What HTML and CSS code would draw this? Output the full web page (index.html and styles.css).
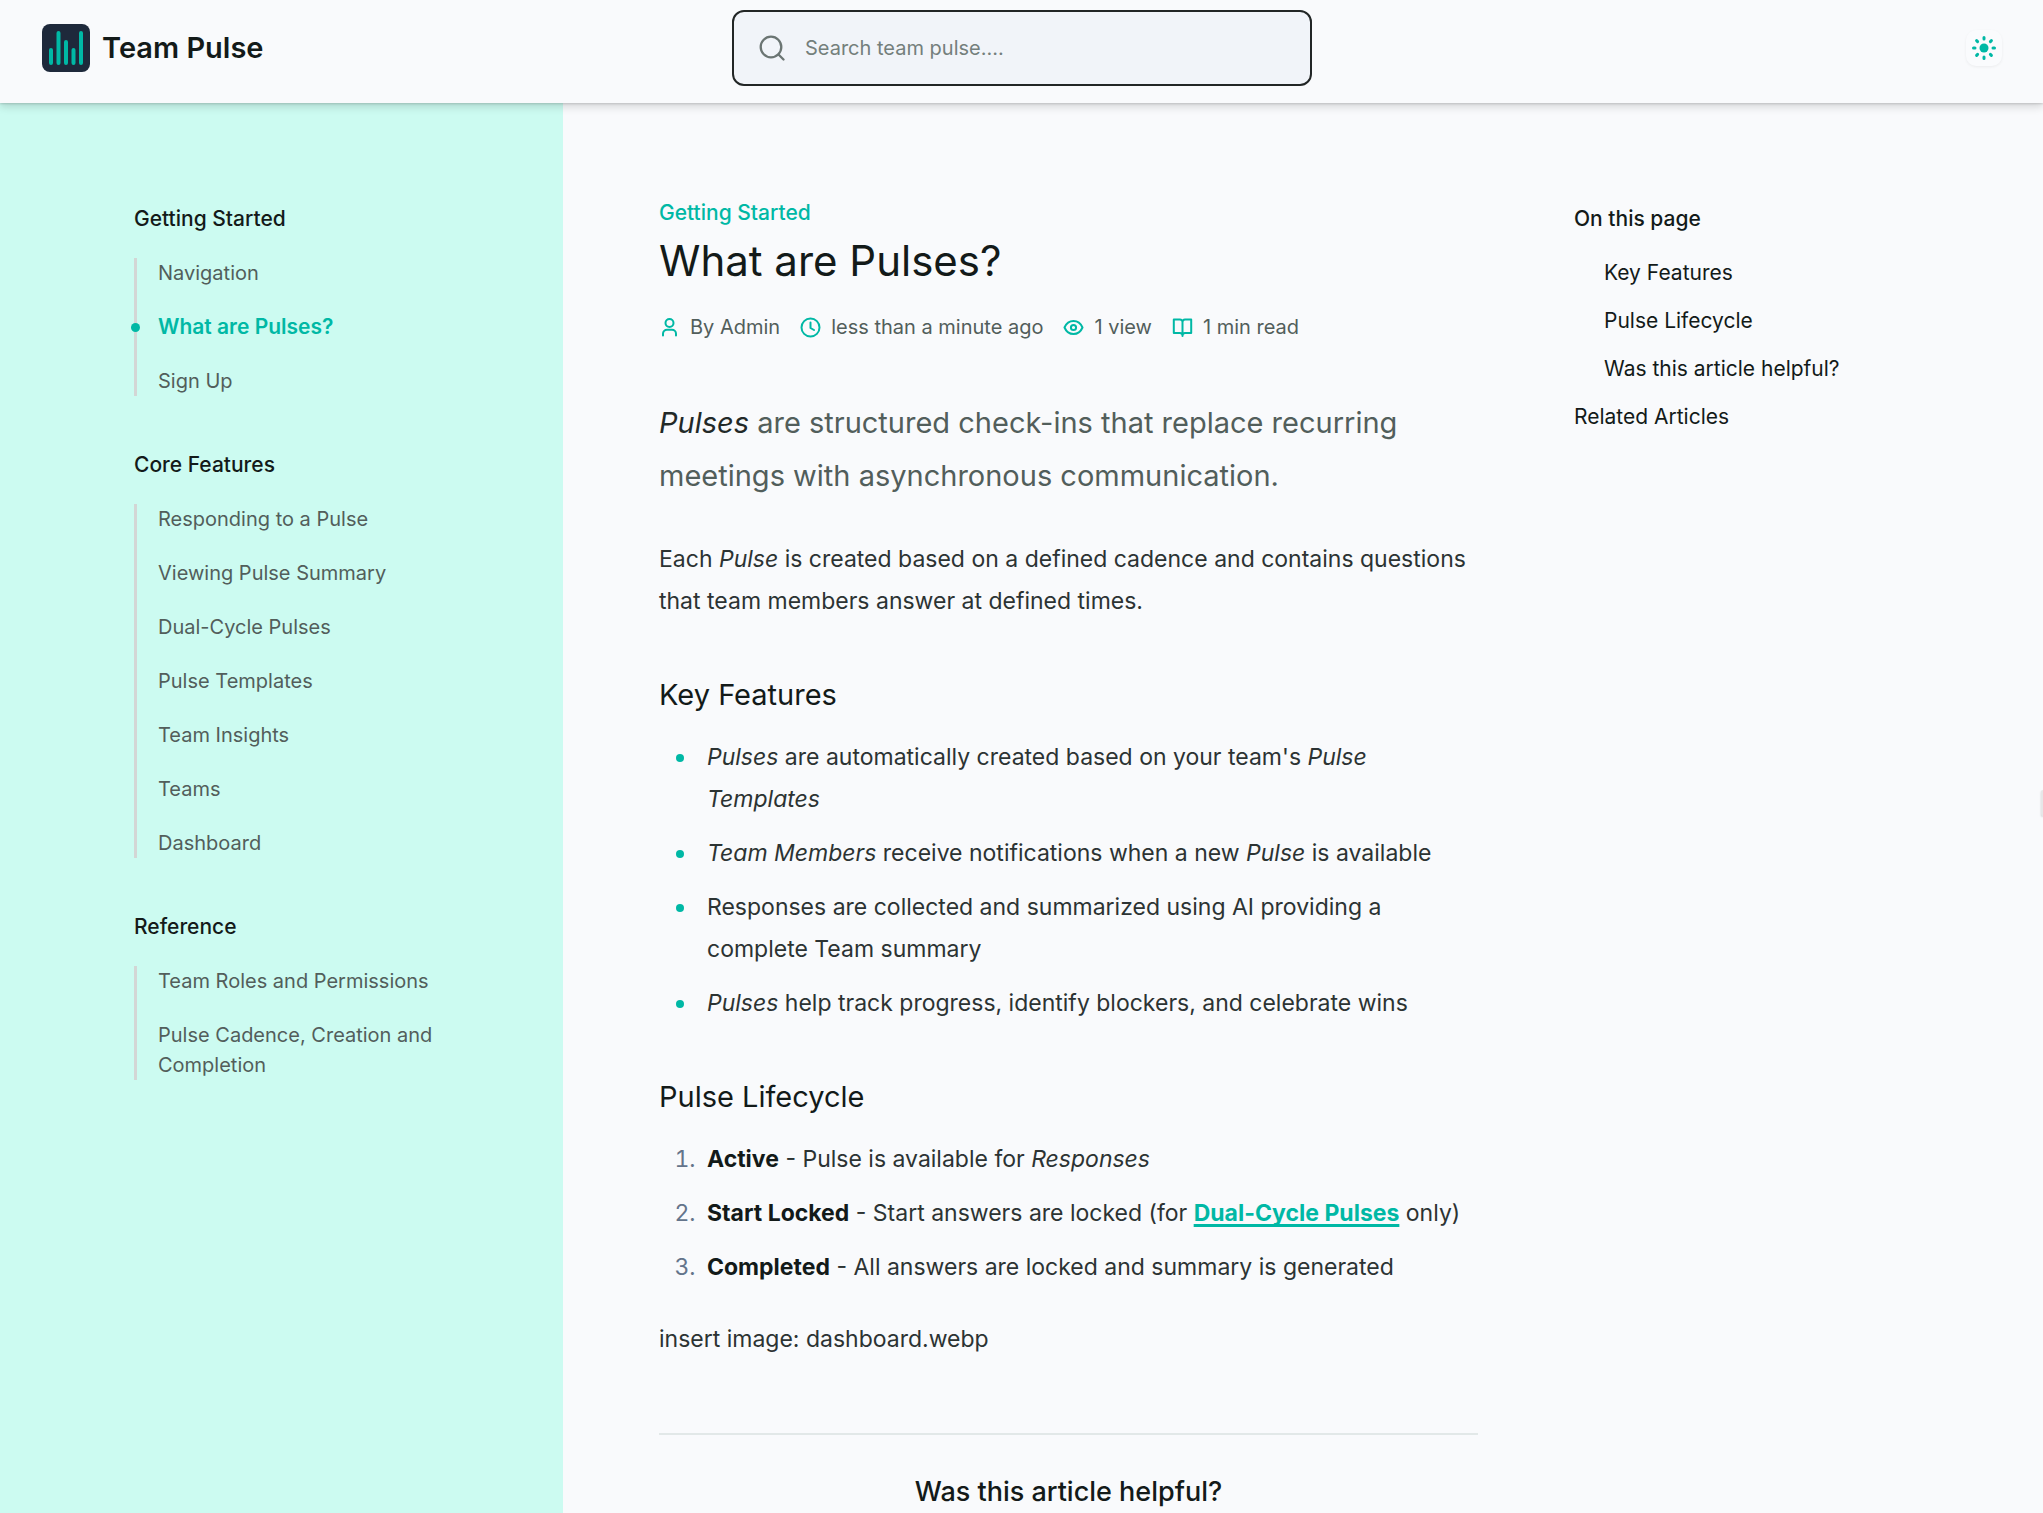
FILE: index.html
```html
<!DOCTYPE html>
<html lang="en">
<head>
<meta charset="utf-8">
<meta name="viewport" content="width=device-width, initial-scale=1">
<title>What are Pulses? - Team Pulse</title>
<link rel="stylesheet" href="styles.css">
</head>
<body>
<header class="site-header">
  <a class="brand" href="#">
    <svg class="brand-mark" viewBox="0 0 48 48" aria-hidden="true">
      <rect width="48" height="48" rx="8" fill="#1e293b"/>
      <path d="M9 26v13M16.500 9v30M24 18v21M31.500 26v13M39 9v30" stroke="#00b8a5" stroke-width="4" stroke-linecap="round"/>
    </svg>
    <span>Team Pulse</span>
  </a>
  <label class="search">
    <svg class="search-icon" viewBox="0 0 26 26" fill="none" stroke="currentColor" stroke-width="2.300" stroke-linecap="round" aria-hidden="true">
      <circle cx="12" cy="12" r="10.300"/><path d="M19.500 19.500l5 5"/>
    </svg>
    <input class="search-input" type="search" placeholder="Search team pulse...." aria-label="Search team pulse">
  </label>
  <button class="theme-button" type="button" aria-label="Switch theme">
    <svg class="theme-icon" viewBox="0 0 24 24" aria-hidden="true">
      <circle cx="12" cy="12" r="4.500" fill="#00b8a5"/>
      <path d="M12 1.500v1.500M12 21v1.500M1.500 12H3M21 12h1.500M4.600 4.600l1 1M18.400 18.400l1 1M4.600 19.400l1-1M18.400 5.600l1-1" stroke="#00b8a5" stroke-width="3" stroke-linecap="round"/>
    </svg>
  </button>
</header>

<div class="layout">
  <nav class="sidebar" aria-label="Documentation">
    <section class="nav-group">
      <h2 class="nav-title">Getting Started</h2>
      <ul class="nav-list">
        <li><a href="#">Navigation</a></li>
        <li class="current"><a href="#" aria-current="page">What are Pulses?</a></li>
        <li><a href="#">Sign Up</a></li>
      </ul>
    </section>
    <section class="nav-group">
      <h2 class="nav-title">Core Features</h2>
      <ul class="nav-list">
        <li><a href="#">Responding to a Pulse</a></li>
        <li><a href="#">Viewing Pulse Summary</a></li>
        <li><a href="#">Dual-Cycle Pulses</a></li>
        <li><a href="#">Pulse Templates</a></li>
        <li><a href="#">Team Insights</a></li>
        <li><a href="#">Teams</a></li>
        <li><a href="#">Dashboard</a></li>
      </ul>
    </section>
    <section class="nav-group">
      <h2 class="nav-title">Reference</h2>
      <ul class="nav-list">
        <li><a href="#">Team Roles and Permissions</a></li>
        <li><a href="#">Pulse Cadence, Creation and Completion</a></li>
      </ul>
    </section>
  </nav>

  <main class="article">
    <p class="section-name">Getting Started</p>
    <h1>What are Pulses?</h1>
    <ul class="meta">
      <li>
        <svg viewBox="0 0 21 21" aria-hidden="true"><circle cx="10.500" cy="6" r="4"/><path d="M4 18.500v-1.800a4 4 0 0 1 4-4h5a4 4 0 0 1 4 4v1.800"/></svg>
        By Admin
      </li>
      <li>
        <svg viewBox="0 0 21 21" aria-hidden="true"><circle cx="10.500" cy="10.500" r="9"/><path d="M10.500 5.500v5.500l3.500 2"/></svg>
        less than a minute ago
      </li>
      <li>
        <svg viewBox="0 0 21 21" aria-hidden="true"><path d="M1.500 10.500C3.200 6.500 6.500 4 10.500 4s7.300 2.500 9 6.500C17.800 14.500 14.500 17 10.500 17S3.200 14.500 1.500 10.500z"/><circle cx="10.500" cy="10.500" r="2.600"/></svg>
        1 view
      </li>
      <li>
        <svg viewBox="0 0 21 21" aria-hidden="true"><path d="M10.500 5v14M1.800 2.500H8A2.500 2.500 0 0 1 10.500 5 2.500 2.500 0 0 1 13 2.500h6.200v13.500H13a2.500 2.500 0 0 0-2.500 2.500A2.500 2.500 0 0 0 8 16H1.800z"/></svg>
        1 min read
      </li>
    </ul>

    <p class="lead"><em>Pulses</em> are structured check-ins that replace recurring meetings with asynchronous communication.</p>
    <p>Each <em>Pulse</em> is created based on a defined cadence and contains questions that team members answer at defined times.</p>

    <h2>Key Features</h2>
    <ul class="features">
      <li><em>Pulses</em> are automatically created based on your team's <em>Pulse Templates</em></li>
      <li><em>Team Members</em> receive notifications when a new <em>Pulse</em> is available</li>
      <li>Responses are collected and summarized using AI providing a complete Team summary</li>
      <li><em>Pulses</em> help track progress, identify blockers, and celebrate wins</li>
    </ul>

    <h2>Pulse Lifecycle</h2>
    <ol class="steps">
      <li><strong>Active</strong> - Pulse is available for <em>Responses</em></li>
      <li><strong>Start Locked</strong> - Start answers are locked (for <a href="#">Dual-Cycle Pulses</a> only)</li>
      <li><strong>Completed</strong> - All answers are locked and summary is generated</li>
    </ol>
    <p>insert image: dashboard.webp</p>

    <section class="feedback">
      <h3>Was this article helpful?</h3>
    </section>
  </main>

  <nav class="toc" aria-label="On this page">
    <h2 class="nav-title">On this page</h2>
    <ul class="toc-list">
      <li class="nested"><a href="#">Key Features</a></li>
      <li class="nested"><a href="#">Pulse Lifecycle</a></li>
      <li class="nested"><a href="#">Was this article helpful?</a></li>
      <li><a href="#">Related Articles</a></li>
    </ul>
  </nav>
</div>
<div class="edge-handle"></div>
</body>
</html>
```
FILE: styles.css
```css
@counter-style step-number {
  system: extends decimal;
  suffix: ".\2002";
}

* {
  box-sizing: border-box;
}

html {
  height: 100%;
  overflow: hidden;
}

body {
  height: 100%;
  margin: 0;
  overflow: hidden;
  display: flex;
  flex-direction: column;
  background: #f9fafc;
  color: #2c3333;
  font-family: Inter, "Liberation Sans", sans-serif;
  font-size: 23px;
  line-height: 42px;
}

h1, h2, h3, p, ul, ol {
  margin: 0;
  padding: 0;
}

ul {
  list-style: none;
}

a {
  color: inherit;
  text-decoration: none;
}

/* Header */
.site-header {
  position: relative;
  z-index: 1;
  flex: none;
  display: grid;
  grid-template-columns: 1fr minmax(0, 580px) 1fr;
  align-items: center;
  padding: 10px 41px 17px 42px;
  background: #f9fafc;
  box-shadow: 0 1px 2px rgba(0, 0, 0, 0.14), 0 4px 8px rgba(0, 0, 0, 0.14);
}

.brand {
  display: flex;
  align-items: center;
  gap: 12px;
  color: #131a19;
  font-size: 29px;
  font-weight: 600;
}

.brand-mark {
  width: 48px;
  height: 48px;
}

.search {
  display: flex;
  align-items: center;
  gap: 20px;
  height: 76px;
  padding: 0 24px 0 25px;
  border: 2px solid #222626;
  border-radius: 12px;
  background: #f1f4f9;
  color: #6b7573;
}

.search-icon {
  flex: none;
  width: 26px;
  height: 26px;
}

.search-input {
  flex: 1;
  min-width: 0;
  padding: 0;
  border: 0;
  outline: 0;
  background: none;
  font: inherit;
  font-size: 20px;
  line-height: 30px;
}

.search-input::placeholder {
  color: #747f7c;
  opacity: 1;
}

.theme-button {
  justify-self: end;
  display: grid;
  place-items: center;
  width: 36px;
  height: 36px;
  padding: 0;
  border: 0;
  border-radius: 10px;
  background: #fafbfd;
  box-shadow: 0 1px 3px rgba(0, 0, 0, 0.06);
}

.theme-icon {
  width: 24px;
  height: 24px;
}

/* Page columns */
.layout {
  flex: 1;
  min-height: 0;
  display: grid;
  grid-template-columns: 563px minmax(0, 1fr) 469px;
}

.sidebar {
  padding: 101px 108px 0 134px;
  background: #ccfbf1;
  display: flex;
  flex-direction: column;
  gap: 54px;
  font-size: 20px;
  line-height: 30px;
}

.nav-title {
  margin-bottom: 24px;
  color: #131a19;
  font-size: 21px;
  line-height: 30px;
  font-weight: 500;
}

.nav-list {
  display: flex;
  flex-direction: column;
  gap: 24px;
  padding-left: 21px;
  border-left: 3px solid #d3d6d5;
  color: #525e5b;
}

.current {
  position: relative;
  color: #00b8a5;
  font-size: 21px;
  font-weight: 600;
}

.current::before {
  content: "";
  position: absolute;
  left: -27px;
  top: 11px;
  width: 9px;
  height: 9px;
  border-radius: 50%;
  background: #00b8a5;
}

/* Article */
.article {
  padding: 95px 96px 0;
}

.section-name {
  color: #00b8a5;
  font-size: 21px;
  line-height: 30px;
  font-weight: 500;
}

h1 {
  margin-top: 6px;
  color: #131a19;
  font-size: 42px;
  line-height: 54px;
  font-weight: 400;
}

.meta {
  display: flex;
  gap: 20px;
  margin: 24px 0 54px;
  color: #525e5b;
  font-size: 20px;
  line-height: 30px;
}

.meta li {
  display: flex;
  align-items: center;
  gap: 10px;
}

.meta svg {
  width: 21px;
  height: 21px;
  fill: none;
  stroke: #00b8a5;
  stroke-width: 2;
  stroke-linecap: round;
  stroke-linejoin: round;
}

.lead {
  margin-bottom: 36px;
  color: #525e5b;
  font-size: 29px;
  line-height: 53px;
}

.lead em {
  color: #222928;
}

.article h2 {
  margin: 50px 0 19px;
  color: #131a19;
  font-size: 29px;
  line-height: 45px;
  font-weight: 400;
}

.features, .steps {
  display: flex;
  flex-direction: column;
  gap: 12px;
}

.features li {
  position: relative;
  padding-left: 48px;
}

.features li::before {
  content: "";
  position: absolute;
  left: 17px;
  top: 18px;
  width: 8px;
  height: 8px;
  border-radius: 50%;
  background: #00b8a5;
}

.steps {
  margin-bottom: 30px;
  padding-left: 48px;
  list-style: step-number;
}

.steps li::marker {
  color: #64748b;
}

.steps strong {
  color: #131a19;
  font-weight: 700;
}

.steps a {
  color: #00b8a5;
  font-weight: 700;
  text-decoration: underline;
  text-decoration-thickness: 3px;
  text-decoration-skip-ink: none;
  text-underline-offset: 3px;
}

.feedback {
  margin-top: 73px;
  padding-top: 36px;
  border-top: 2px solid #e2e8e8;
  text-align: center;
}

.feedback h3 {
  color: #131a19;
  font-size: 27px;
  line-height: 42px;
  font-weight: 500;
}

/* Table of contents */
.toc {
  padding-top: 101px;
  font-size: 21px;
  line-height: 30px;
}

.toc-list {
  display: flex;
  flex-direction: column;
  gap: 18px;
  color: #131a19;
}

.nested {
  padding-left: 30px;
}

.edge-handle {
  position: fixed;
  z-index: 2;
  top: 790px;
  right: 0;
  width: 2px;
  height: 26px;
  border-radius: 2px 0 0 2px;
  background: #e6e7e8;
  box-shadow: 0 1px 2px rgba(0, 0, 0, 0.2);
}
```
